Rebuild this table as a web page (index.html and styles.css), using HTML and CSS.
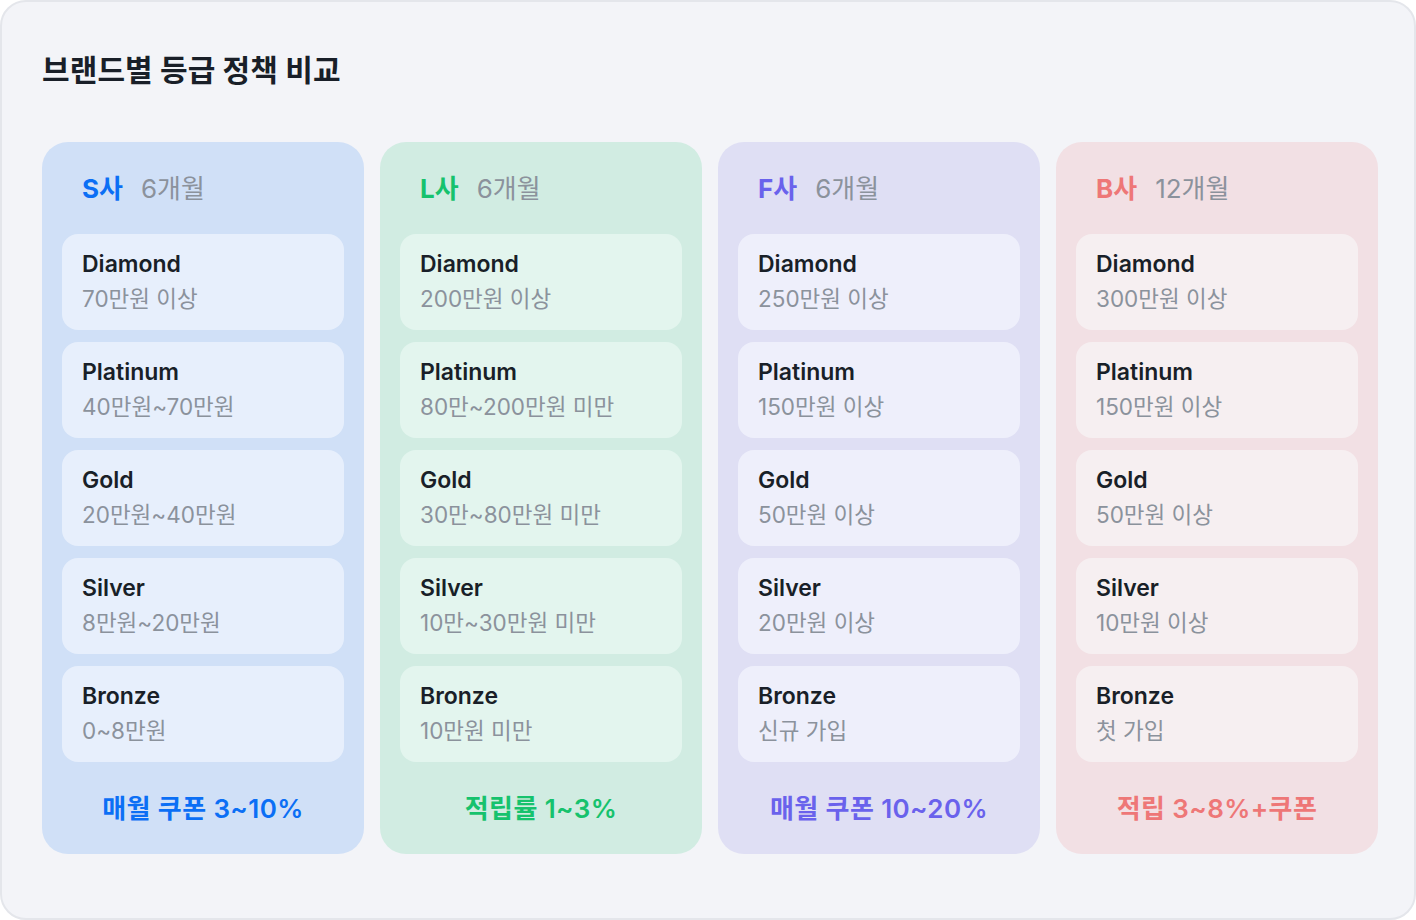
FILE: index.html
```html
<!DOCTYPE html>
<html lang="ko">
<head>
<meta charset="utf-8">
<title>브랜드별 등급 정책 비교</title>
<link rel="stylesheet" href="styles.css">
</head>
<body>
<main class="panel">
  <h1 class="title">브랜드별 등급 정책 비교</h1>
  <div class="grid">
    <section class="col col-s">
      <header class="col-head"><span class="brand">S사</span><span class="period">6개월</span></header>
      <div class="cards">
        <div class="card"><div class="tier">Diamond</div><div class="range">70만원 이상</div></div>
        <div class="card"><div class="tier">Platinum</div><div class="range">40만원~70만원</div></div>
        <div class="card"><div class="tier">Gold</div><div class="range">20만원~40만원</div></div>
        <div class="card"><div class="tier">Silver</div><div class="range">8만원~20만원</div></div>
        <div class="card"><div class="tier">Bronze</div><div class="range">0~8만원</div></div>
      </div>
      <footer class="col-foot">매월 쿠폰 3~10%</footer>
    </section>
    <section class="col col-l">
      <header class="col-head"><span class="brand">L사</span><span class="period">6개월</span></header>
      <div class="cards">
        <div class="card"><div class="tier">Diamond</div><div class="range">200만원 이상</div></div>
        <div class="card"><div class="tier">Platinum</div><div class="range">80만~200만원 미만</div></div>
        <div class="card"><div class="tier">Gold</div><div class="range">30만~80만원 미만</div></div>
        <div class="card"><div class="tier">Silver</div><div class="range">10만~30만원 미만</div></div>
        <div class="card"><div class="tier">Bronze</div><div class="range">10만원 미만</div></div>
      </div>
      <footer class="col-foot">적립률 1~3%</footer>
    </section>
    <section class="col col-f">
      <header class="col-head"><span class="brand">F사</span><span class="period">6개월</span></header>
      <div class="cards">
        <div class="card"><div class="tier">Diamond</div><div class="range">250만원 이상</div></div>
        <div class="card"><div class="tier">Platinum</div><div class="range">150만원 이상</div></div>
        <div class="card"><div class="tier">Gold</div><div class="range">50만원 이상</div></div>
        <div class="card"><div class="tier">Silver</div><div class="range">20만원 이상</div></div>
        <div class="card"><div class="tier">Bronze</div><div class="range">신규 가입</div></div>
      </div>
      <footer class="col-foot">매월 쿠폰 10~20%</footer>
    </section>
    <section class="col col-b">
      <header class="col-head"><span class="brand">B사</span><span class="period">12개월</span></header>
      <div class="cards">
        <div class="card"><div class="tier">Diamond</div><div class="range">300만원 이상</div></div>
        <div class="card"><div class="tier">Platinum</div><div class="range">150만원 이상</div></div>
        <div class="card"><div class="tier">Gold</div><div class="range">50만원 이상</div></div>
        <div class="card"><div class="tier">Silver</div><div class="range">10만원 이상</div></div>
        <div class="card"><div class="tier">Bronze</div><div class="range">첫 가입</div></div>
      </div>
      <footer class="col-foot">적립 3~8%+쿠폰</footer>
    </section>
  </div>
</main>
</body>
</html>
```

FILE: styles.css
```css
* { box-sizing: border-box; }
html, body { margin: 0; padding: 0; }
body {
  width: 1416px;
  height: 920px;
  background: #ffffff;
  font-family: Inter, "Noto Sans CJK KR", sans-serif;
  color: #191f28;
}
.panel {
  width: 1416px;
  height: 920px;
  background: #f3f4f8;
  border: 2px solid #e4e6eb;
  border-radius: 26px;
  padding: 0 36px 0 40px;
}
.title {
  margin: 0;
  height: 140px;
  padding-top: 48px;
  font-size: 30px;
  line-height: 40px;
  font-weight: 700;
  letter-spacing: 0.1px;
  color: #191f28;
}
.grid {
  display: grid;
  grid-template-columns: repeat(4, 322px);
  gap: 16px;
}
.col {
  border-radius: 26px;
  padding: 0 20px;
  display: flex;
  flex-direction: column;
}
.col-head {
  height: 92px;
  display: flex;
  align-items: center;
  gap: 18px;
  padding-left: 20px;
  padding-bottom: 4px;
  font-size: 26px;
}
.brand { font-weight: 700; }
.period { color: #8b929c; font-weight: 400; }
.cards {
  display: flex;
  flex-direction: column;
  gap: 12px;
}
.card {
  height: 96px;
  border-radius: 16px;
  padding: 14px 20px 0;
}
.tier {
  font-size: 23px;
  line-height: 32px;
  font-weight: 600;
  color: #191f28;
}
.range {
  margin-top: 3px;
  font-size: 22.5px;
  line-height: 32px;
  font-weight: 400;
  color: #8b929c;
}
.col-foot {
  height: 92px;
  display: flex;
  align-items: center;
  justify-content: center;
  padding-bottom: 4px;
  font-size: 26px;
  font-weight: 600;
  letter-spacing: 0.4px;
}

.col-s { background: #d0e0f7; }
.col-s .card { background: #e7effc; }
.col-s .brand, .col-s .col-foot { color: #0b6ff5; }

.col-l { background: #d1ece2; }
.col-l .card { background: #e3f5ee; }
.col-l .brand, .col-l .col-foot { color: #16c26d; }

.col-f { background: #dfdff4; }
.col-f .card { background: #eeeffb; }
.col-f .brand, .col-f .col-foot { color: #6a62ec; }

.col-b { background: #f2e0e4; }
.col-b .card { background: #f6eff1; }
.col-b .brand, .col-b .col-foot { color: #ee7777; }
```
